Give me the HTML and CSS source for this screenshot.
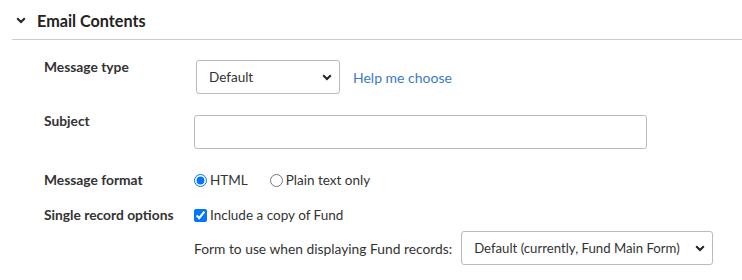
FILE: index.html
```html
<!DOCTYPE html>
<html>
<head>
<meta charset="utf-8">
<link rel="stylesheet" href="styles.css">
</head>
<body>
<div class="section">
  <div class="section-head">
    <svg class="chev" width="10" height="7" viewBox="0 0 10 7"><path d="M1.2 1.2 L5 5 L8.8 1.2" fill="none" stroke="#222" stroke-width="2"/></svg>
    <span class="title">Email Contents</span>
  </div>
  <div class="form">
    <div class="row row-type">
      <div class="label">Message type</div>
      <div class="field">
        <span class="select-wrap sel-type">
          <select class="select"><option>Default</option></select>
          <svg class="sel-arrow" width="10" height="7" viewBox="0 0 10 7"><path d="M1.2 1.2 L5 5 L8.8 1.2" fill="none" stroke="#222" stroke-width="2"/></svg>
        </span>
        <a class="help" href="#">Help me choose</a>
      </div>
    </div>
    <div class="row row-subject">
      <div class="label">Subject</div>
      <div class="field">
        <input class="text" type="text">
      </div>
    </div>
    <div class="row row-format">
      <div class="label">Message format</div>
      <div class="field">
        <label class="opt"><input type="radio" name="fmt" checked>HTML</label>
        <label class="opt opt-plain"><input type="radio" name="fmt">Plain text only</label>
      </div>
    </div>
    <div class="row row-single">
      <div class="label">Single record options</div>
      <div class="field col">
        <label class="opt"><input type="checkbox" checked>Include a copy of Fund</label>
        <div class="form-line">
          <span class="form-text">Form to use when displaying Fund records:</span>
          <span class="select-wrap sel-form">
            <select class="select"><option>Default (currently, Fund Main Form)</option></select>
            <svg class="sel-arrow" width="10" height="7" viewBox="0 0 10 7"><path d="M1.2 1.2 L5 5 L8.8 1.2" fill="none" stroke="#222" stroke-width="2"/></svg>
          </span>
        </div>
      </div>
    </div>
  </div>
</div>
</body>
</html>
```
FILE: styles.css
```css
html, body {
  margin: 0;
  padding: 0;
  background: #fff;
}
body {
  font-family: Lato, "Open Sans", sans-serif;
  color: #333;
  font-size: 13.5px;
}
.section-head {
  display: flex;
  align-items: center;
  height: 40px;
  margin-left: 12px;
  border-bottom: 1px solid #cccccc;
  box-sizing: border-box;
  padding-top: 1px;
}
.chev {
  margin-left: 4px;
  margin-right: 11px;
}
.title {
  font-weight: 700;
  font-size: 16.2px;
  color: #222;
}
.form {
  padding-left: 44px;
}
.row {
  display: flex;
  align-items: flex-start;
}
.label {
  width: 150px;
  flex: none;
  font-weight: 700;
  font-size: 13.8px;
  color: #333;
  line-height: 18px;
}
.field {
  display: flex;
  align-items: center;
}
.field.col {
  flex-direction: column;
  align-items: flex-start;
}
.row-type {
  margin-top: 20px;
}
.row-type .label {
  margin-top: -2px;
}
.select-wrap {
  position: relative;
  display: inline-block;
}
.select {
  appearance: none;
  -webkit-appearance: none;
  font-family: Lato, "Open Sans", sans-serif;
  font-size: 13.5px;
  color: #333;
  background: #fff;
  border: 1px solid #bbbbbb;
  border-radius: 3px;
  height: 34px;
  padding: 0 24px 0 12px;
  margin: 0;
  box-sizing: border-box;
}
.sel-arrow {
  position: absolute;
  top: 14px;
  pointer-events: none;
}
.sel-type {
  margin-left: 2px;
}
.sel-type .select {
  width: 144px;
}
.sel-type .sel-arrow {
  right: 8px;
}
.help {
  color: #3d78c7;
  text-decoration: none;
  margin-left: 13px;
  font-size: 14px;
}
.row-subject {
  margin-top: 21px;
}
.row-subject .label {
  margin-top: -3px;
}
.text {
  width: 453px;
  height: 34px;
  border: 1px solid #bbbbbb;
  border-radius: 3px;
  box-sizing: border-box;
  margin: 0;
  font-family: Lato, sans-serif;
  font-size: 14px;
}
.row-format {
  margin-top: 22px;
  align-items: center;
}
.row-format .label {
  margin-top: 0;
}
.opt {
  display: inline-flex;
  align-items: center;
  font-size: 13.5px;
  color: #333;
  line-height: 18px;
}
.opt input {
  margin: 0 3px 0 0;
  width: 13px;
  height: 13px;
}
.opt-plain {
  margin-left: 22px;
}
.row-single {
  margin-top: 17px;
}
.row-single .label {
  margin-top: 0;
}
.form-line {
  display: flex;
  align-items: center;
  margin-top: 7px;
}
.form-text {
  font-size: 13.8px;
  color: #333;
}
.sel-form {
  margin-left: 9px;
}
.sel-form .select {
  width: 252px;
  height: 34px;
  padding-left: 12px;
  font-size: 13.2px;
}
.sel-form .sel-arrow {
  right: 8px;
}
```
